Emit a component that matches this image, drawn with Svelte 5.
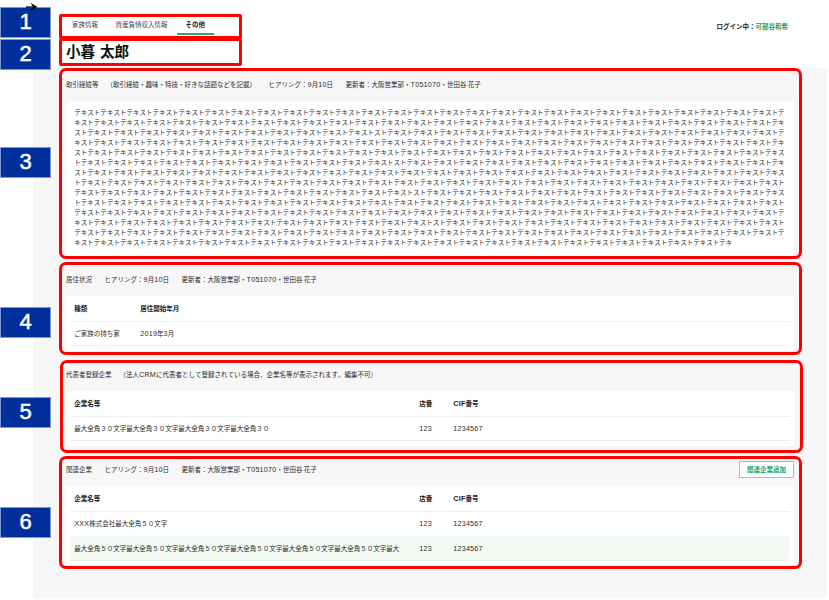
<script>
  const unit = 'テキスト';
  const block = 'スト' + unit.repeat(82);
  const note = unit.repeat(66) + block.repeat(3) + 'スト' + unit.repeat(65) + 'テキ';

  const badges = [
    { n: 1, y: 7 },
    { n: 2, y: 39 },
    { n: 3, y: 147 },
    { n: 4, y: 307 },
    { n: 5, y: 397 },
    { n: 6, y: 507 },
  ];
  const related = [
    ['XXX', '株式会社最大全角５０文字', '123', '1234567'],
    ['', '最大全角５０文字'.repeat(6) + '最大', '123', '1234567'],
  ];
</script>

{#snippet updated()}
  <span class="heard">ヒアリング：<b>9</b>月<b>10</b>日</span>
  <span class="by">更新者：大阪営業部・<b>T051070</b>・世田谷 花子</span>
{/snippet}

<div class="screen">
  <header>
    <div class="left">
      <nav class="frame">
        <span class="tab">家族情報</span>
        <span class="tab">資産負債収入情報</span>
        <span class="tab active">その他</span>
      </nav>
      <h1 class="frame">小暮 太郎</h1>
    </div>
    <div class="login">ログイン中：<span>可部谷和希</span></div>
  </header>

  <main>
    <section class="frame history">
      <div class="head">
        <span class="title">取引経緯等</span>
        <span class="hint">（取引経緯・趣味・特技・好きな話題などを記載）</span>
        {@render updated()}
      </div>
      <div class="panel note"><p>{note}</p></div>
    </section>

    <section class="frame home">
      <div class="head"><span class="title">居住状況</span>{@render updated()}</div>
      <div class="panel">
        <div class="row th"><span class="kind">種類</span><span>居住開始年月</span></div>
        <div class="row"><span class="kind">ご家族の持ち家</span><span><b>2019</b>年<b>3</b>月</span></div>
      </div>
    </section>

    <section class="frame rep">
      <div class="head">
        <span class="title">代表者登録企業</span>
        <span class="hint">（法人<b>CRM</b>に代表者として登録されている場合、企業名等が表示されます。編集不可）</span>
      </div>
      <div class="panel">
        <div class="row th"><span class="name">企業名等</span><span class="shop">店番</span><span><b>CIF</b>番号</span></div>
        <div class="row">
          <span class="name">最大全角３０文字最大全角３０文字最大全角３０文字最大全角３０</span>
          <span class="shop"><b>123</b></span><span><b>1234567</b></span>
        </div>
      </div>
    </section>

    <section class="frame rel">
      <div class="head">
        <span class="title">関連企業</span>{@render updated()}
        <button>関連企業追加</button>
      </div>
      <div class="panel">
        <div class="row th"><span class="name">企業名等</span><span class="shop">店番</span><span><b>CIF</b>番号</span></div>
        {#each related as [latin, name, shop, cif], i}
          <div class="row" class:plain={i === 0} class:green={i === 1}>
            <span class="name"><b>{latin}</b>{name}</span>
            <span class="shop"><b>{shop}</b></span><span><b>{cif}</b></span>
          </div>
        {/each}
      </div>
    </section>
  </main>

  {#each badges as badge}
    <div class="badge" style="top: {badge.y}px">{badge.n}</div>
  {/each}
  <svg class="arrow" width="14" height="10" viewBox="0 0 14 10">
    <path d="M1 5H9" stroke="#000" stroke-width="1.3" />
    <path d="M5.5 .8L12.5 5L5.5 9L8 5Z" fill="#000" />
  </svg>
</div>

<style>
  .screen {
    position: relative;
    width: 829px;
    height: 600px;
    overflow: hidden;
    background: #fff;
    color: #2b2b2b;
    font: 400 6.5px/10px 'Noto Sans CJK JP', sans-serif;
    font-feature-settings: 'palt' 0, 'kern' 0;
    text-spacing-trim: space-all;
    white-space: nowrap;
  }
  .screen * { box-sizing: border-box; }
  b {
    font-family: 'Liberation Sans', sans-serif;
    font-size: 7.2px;
    line-height: 1px;
    font-weight: inherit;
    letter-spacing: 0.2px;
  }
  .frame { border: 3px solid #f00; }
  header {
    display: flex;
    justify-content: space-between;
    height: 68px;
    padding: 14px 41px 0 59px;
  }
  .left { width: 183px; }
  nav {
    display: flex;
    height: 25px;
    padding-left: 10px;
    border-radius: 2px;
    color: #444;
  }
  .tab { height: 18px; padding-top: 2px; margin-right: 17.6px; }
  .tab.active {
    width: 37px;
    height: 17.5px;
    margin-left: -8.4px;
    text-align: center;
    font-weight: 700;
    color: #222;
    border-bottom: 2px solid #2aa774;
  }
  h1 {
    height: 28px;
    margin: -1px 0 0;
    padding-left: 4px;
    border-radius: 2px;
    font-size: 14.6px;
    line-height: 19px;
    font-weight: 700;
    word-spacing: 1.5px;
    color: #111;
  }
  .login { padding-top: 7px; font-weight: 700; color: #222; }
  .login span { color: #12a36b; }
  main {
    width: 794px;
    height: 530px;
    margin-left: 33px;
    padding-left: 26px;
    background: #f7f7f7;
  }
  section { width: 743px; border-radius: 7px; padding: 0 5px 0 4px; overflow: hidden; }
  .history { height: 191px; }
  .home { height: 93px; margin-top: 3px; }
  .rep { width: 743px; height: 93px; margin: 5px 0 0 1px; padding: 0 6px 0 3px; }
  .rel { height: 113px; margin-top: 3px; }
  .head { display: flex; align-items: center; height: 31px; padding-bottom: 3px; }
  .history .head { height: 30px; padding-bottom: 5px; }
  .title { color: #333; }
  .hint { margin-left: 8px; }
  .heard { margin-left: 12.5px; }
  .by { margin-left: 12.5px; }
  .panel { background: #fff; border-radius: 2px; padding: 0 4px 5px; }
  .note { height: 156px; padding: 7.4px 0 0 8.3px; }
  .note p {
    width: 712px;
    margin: 0;
    font-size: 6.52px;
    line-height: 9.95px;
    white-space: normal;
    word-break: break-all;
  }
  .row {
    display: flex;
    align-items: center;
    height: 24px;
    padding: 0 0 2px 4.3px;
    border-bottom: 1px solid #eee;
  }
  .row.th { height: 26px; font-weight: 700; color: #222; }
  .row.plain { height: 24px; border: 0; }
  .row.green { background: #f3faf4; height: 25px; padding-bottom: 0; }
  .kind { width: 66px; }
  .name { width: 345px; }
  .shop { width: 34px; }
  .rep .head { height: 28px; padding-bottom: 6px; }
  .rel .head { height: 27px; align-items: flex-start; padding: 5px 0 0; }
  button {
    width: 55px;
    height: 17px;
    margin: -3px 0 0 auto;
    padding: 0;
    border: 1px solid #86d1b0;
    background: #fff;
    color: #12a36b;
    font: 700 6.5px/13px 'Noto Sans CJK JP', sans-serif;
  }
  .badge {
    position: absolute;
    left: 0;
    width: 51px;
    height: 31px;
    border: 1px solid #7f97cf;
    background: #002f9c;
    color: #fff;
    font: 22px/28px 'Liberation Sans', sans-serif;
    -webkit-text-stroke: 0.5px #fff;
    text-align: center;
  }
  .arrow { position: absolute; left: 25px; top: 2px; }
</style>
